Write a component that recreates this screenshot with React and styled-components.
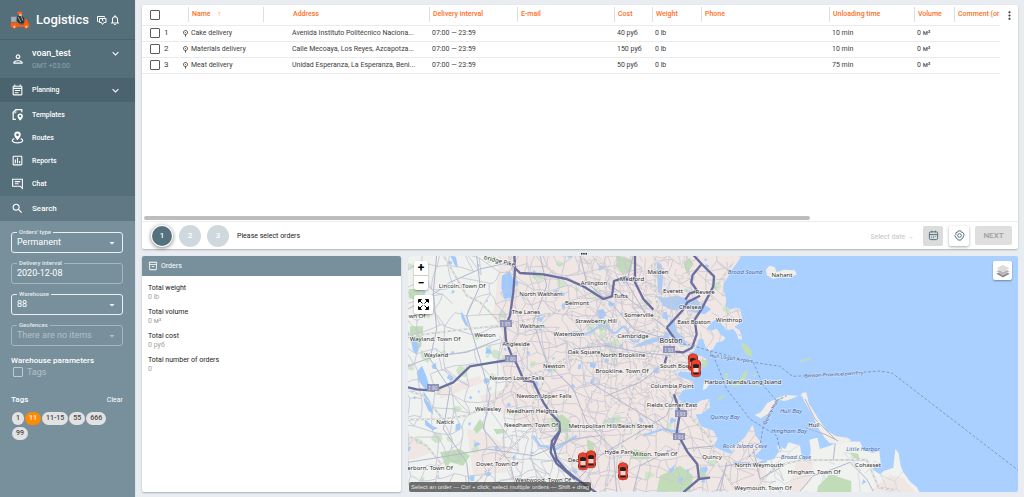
import React, { useState } from 'react';
import styled, { createGlobalStyle } from 'styled-components';
import {
  MdOutlinePerson,
  MdOutlineEventNote,
  MdOutlineAssessment,
  MdSearch,
  MdExpandMore,
  MdOutlineNotifications,
  MdMoreVert,
  MdOutlineInventory2,
  MdArrowDropDown,
} from 'react-icons/md';

const GlobalStyle = createGlobalStyle`
  * {
    box-sizing: border-box;
  }

  body {
    margin: 0;
    background: #e9edf1;
    color: #3c3c3c;
    font-family: Roboto, "Liberation Sans", sans-serif;
    font-size: 7px;
    line-height: 10px;
  }

  button, input, select {
    font: inherit;
    color: inherit;
    margin: 0;
  }

  button {
    padding: 0;
    border: none;
    background: none;
    cursor: pointer;
  }
`;

const Page = styled.div`
  display: flex;
  min-height: 100vh;
`;

/* ---------- sidebar ---------- */

const Sidebar = styled.aside`
  display: flex;
  flex-direction: column;
  flex: 0 0 136px;
  background: #78909c;
  border-right: 1px solid #dfe5e8;
  color: #fff;
`;

const Brand = styled.header`
  display: flex;
  align-items: center;
  height: 40px;
  padding: 0 14px 0 10px;
  background: #546e7a;
  border-bottom: 1px solid #4a626d;

  h1 {
    flex: 1;
    margin: 0 0 0 6px;
    font-size: 13px;
    line-height: 16px;
    font-weight: 500;
  }
`;

const IconButton = styled.button`
  display: flex;
  margin-left: 1px;
  font-size: 12px;
`;

const User = styled.button`
  display: flex;
  align-items: center;
  height: 38px;
  padding: 0 13px 0 11px;
  background: #546e7a;
  text-align: left;

  > svg:first-child {
    font-size: 14px;
  }
`;

const UserText = styled.span`
  flex: 1;
  margin-left: 7px;

  strong, small {
    display: block;
  }

  strong {
    font-size: 9px;
    line-height: 13px;
    font-weight: 500;
  }

  small {
    font-size: 7px;
    line-height: 12px;
    color: #8fa3ad;
  }
`;

const Chevron = styled(MdExpandMore)`
  align-self: ${(props) => (props.$top ? 'flex-start' : 'center')};
  margin-top: ${(props) => (props.$top ? '7px' : '0')};
  margin-left: auto;
  font-size: 13px;
`;

const Nav = styled.nav`
  background: #546e7a;
`;

const NavGroup = styled.div`
  padding: 1px 0;
`;

const NavLink = styled.a`
  display: flex;
  align-items: center;
  height: ${(props) => props.$height || '23px'};
  padding: 0 13px 0 11px;
  gap: 8px;
  background: ${(props) => props.$bg || 'transparent'};
  color: #fff;
  font-size: ${(props) => (props.$large ? '8px' : '7px')};
  font-weight: 500;
  text-decoration: none;

  > svg {
    font-size: 13px;
  }
`;

const Filters = styled.form`
  display: flex;
  flex-direction: column;
  gap: 6px;
  padding: 7px 12px 0 11px;
`;

const Field = styled.fieldset`
  min-width: 0;
  margin: 0;
  padding: 0 4px 3px;
  border: 1px solid ${(props) => (props.$dim ? '#a7b6be' : '#eceff1')};
  border-radius: 3px;
  position: relative;
  color: ${(props) => (props.$disabled ? '#b4c1c8' : '#fff')};

  legend {
    margin-left: 1px;
    padding: 0 2px;
    font-size: 6px;
    line-height: 8px;
    font-weight: 500;
    color: #e4eaed;
  }

  input, select {
    display: block;
    width: 100%;
    height: 13px;
    padding: 0 0 0 1px;
    border: none;
    outline: none;
    background: none;
    appearance: none;
    font-size: 9px;
    line-height: 13px;
    font-weight: 400;
    opacity: 1;
  }

  svg {
    position: absolute;
    right: 4px;
    bottom: 3px;
    font-size: 12px;
    pointer-events: none;
  }
`;

const WarehouseParams = styled.div`
  margin-top: 3px;

  h2 {
    margin: 0;
    font-size: 8px;
    line-height: 12px;
    font-weight: 500;
  }

  label {
    display: flex;
    align-items: center;
    gap: 4px;
    padding-left: 2px;
    color: #b4c1c8;
    font-size: 9px;
  }
`;

const Checkbox = styled.input.attrs({ type: 'checkbox' })`
  appearance: none;
  flex: none;
  width: 10px;
  height: 10px;
  border: 1px solid ${(props) => props.$color || '#5c5c5c'};
  border-radius: 1px;

  &:checked {
    background: #ff8a00;
  }
`;

const TagsHead = styled.div`
  display: flex;
  justify-content: space-between;
  align-items: center;
  margin-top: 11px;

  h2 {
    margin: 0;
    font-size: 8px;
    line-height: 12px;
    font-weight: 500;
  }

  button {
    font-size: 7px;
  }
`;

const Tags = styled.div`
  display: flex;
  flex-wrap: wrap;
  gap: 2px 1px;
  padding-left: 1px;
`;

const Tag = styled.button`
  height: 13px;
  padding: 0 4px;
  border-radius: 7px;
  background: ${(props) => (props.$active ? '#ff8a00' : '#e2e2e2')};
  color: ${(props) => (props.$active ? '#fff' : '#484848')};
  font-size: 7px;
  line-height: 13px;
  font-weight: 500;
`;

/* ---------- content ---------- */

const Content = styled.main`
  display: flex;
  flex-direction: column;
  flex: 1;
  min-width: 0;
  padding: 5px 6px;
`;

const Card = styled.section`
  background: #fff;
  border-radius: 2px;
  box-shadow: 0 1px 2px rgba(0, 0, 0, 0.25);
`;

const OrdersCard = styled(Card)`
  display: flex;
  flex-direction: column;
  flex: 244 1 0;
`;

const TableArea = styled.div`
  display: flex;
  align-items: flex-start;
  flex: 1;
  overflow: hidden;
`;

const Table = styled.table`
  flex: 1;
  width: 100%;
  min-width: 0;
  table-layout: fixed;
  border-collapse: collapse;

  th, td {
    padding: 0 0 0 3px;
    border-bottom: 1px solid #ebebeb;
    text-align: left;
    font-weight: 400;
    white-space: nowrap;
    overflow: hidden;
  }

  th {
    height: 20px;
    color: #ff6f26;
    font-weight: 500;
  }

  th span {
    display: block;
    height: 15px;
    margin-left: -3px;
    padding-left: 3px;
    border-left: 1px solid #dedede;
    line-height: 15px;
    overflow: hidden;
  }

  td {
    height: 16px;
  }

  th:nth-child(3) span {
    padding-left: 29px;
  }

  td:nth-child(3) {
    padding-left: 29px;
  }

  th:first-child, td:first-child {
    padding-left: 8px;
  }
`;

const SortArrow = styled.i`
  margin-left: 7px;
  font-style: normal;
`;

const RowHead = styled.label`
  display: flex;
  align-items: center;
  gap: 4px;
  font-size: 8px;

  svg {
    margin-left: auto;
  }
`;

const MenuButton = styled.button`
  display: flex;
  align-items: center;
  justify-content: center;
  flex: 0 0 18px;
  height: 20px;
  font-size: 13px;
`;

const Scrollbar = styled.div`
  width: 76%;
  height: 4px;
  margin: 0 2px 1px;
  border-radius: 2px;
  background: #bdbdbd;
`;

const Footer = styled.footer`
  display: flex;
  align-items: center;
  height: 28px;
  padding: 0 6px 0 10px;
  border-top: 1px solid #ececec;
`;

const Step = styled.button`
  width: ${(props) => (props.$active ? '20px' : '22px')};
  height: ${(props) => (props.$active ? '20px' : '22px')};
  margin-right: ${(props) => (props.$active ? '7px' : '6px')};
  border-radius: 50%;
  background: ${(props) => (props.$active ? '#56717e' : '#cfd8dc')};
  box-shadow: ${(props) => (props.$active ? '0 0 0 1px #fff, 0 1px 4px 1px rgba(0, 0, 0, 0.5)' : 'none')};
  color: #fff;
  font-size: 8px;
  font-weight: 500;
`;

const Hint = styled.p`
  flex: 1;
  margin: 0 0 0 2px;
  color: #222;
`;

const DateHint = styled.span`
  margin-right: 9px;
  padding-top: 3px;
  color: #c4c4c4;
`;

const SquareButton = styled.button`
  display: flex;
  align-items: center;
  justify-content: center;
  width: 20px;
  height: 20px;
  margin-right: 6px;
  border-radius: 2px;
  background: ${(props) => (props.$flat ? '#dcdcdc' : '#fff')};
  box-shadow: ${(props) => (props.$flat ? 'none' : '0 1px 3px rgba(0, 0, 0, 0.35)')};
  color: #4c6a78;
  font-size: 11px;
`;

const NextButton = styled.button`
  width: 37px;
  height: 19px;
  border-radius: 2px;
  background: #dfdfdf;
  color: #a0a0a0;
  font-size: 8px;
  font-weight: 500;
`;

const Splitter = styled.div`
  height: 7px;
  padding-left: 8px;
  text-align: center;
  line-height: 0;
`;

const Lower = styled.div`
  display: grid;
  grid-template-columns: minmax(0, 259fr) minmax(0, 610fr);
  gap: 7px;
  flex: 236 1 0;
`;

const PanelTitle = styled.h2`
  display: flex;
  align-items: center;
  gap: 3px;
  height: 20px;
  margin: 0;
  padding-left: 6px;
  border-radius: 2px 2px 0 0;
  background: #78909c;
  color: #fff;
  font-size: 7px;
  font-weight: 400;

  svg {
    font-size: 10px;
  }
`;

const Totals = styled.dl`
  margin: 0;
  padding: 7px 6px;

  dt {
    color: #222;
  }

  dd {
    margin: 0 0 5px;
    color: #a3a3a3;
    line-height: 9px;
  }
`;

const MapPanel = styled.section`
  position: relative;
  min-height: 236px;
  border-radius: 2px;
  background: #aad0ff;
  overflow: hidden;
`;

const MapSvg = styled.svg`
  position: absolute;
  inset: 0;
  width: 100%;
  height: 100%;
  font-family: "Noto Sans", sans-serif;
`;

const MapControls = styled.div`
  position: absolute;
  top: 5px;
  left: 6px;
`;

const ZoomGroup = styled.div`
  width: 14px;
  margin-bottom: 5px;
  border-radius: 2px;
  background: #fff;
  box-shadow: 0 1px 2px rgba(0, 0, 0, 0.35);

  button {
    display: block;
    width: 14px;
    height: 14px;
    color: #000;
    font-size: 12px;
    line-height: 14px;
    font-weight: 700;
  }

  button + button {
    height: 15px;
    border-top: 1px solid #ccc;
  }
`;

const MapButton = styled.button`
  display: flex;
  align-items: center;
  justify-content: center;
  width: 19px;
  height: 19px;
  border-radius: 2px;
  background: #fff;
  box-shadow: 0 1px 2px rgba(0, 0, 0, 0.35);
`;

const LayersButton = styled(MapButton)`
  position: absolute;
  top: 5px;
  right: 6px;
`;

const MapHint = styled.p`
  position: absolute;
  bottom: 0;
  left: 1px;
  margin: 0;
  padding: 0 2px;
  border-radius: 2px;
  background: rgba(60, 60, 60, 0.72);
  color: #e4e4e4;
  font-family: "Liberation Sans", sans-serif;
  font-size: 6px;
`;

/* ---------- icons ---------- */

const Logo = () => (
  <svg width="20" height="18" viewBox="0 0 60 54" aria-hidden="true">
    <path d="M3 17h17v17H3z" fill="#9a9fa2" />
    <path d="M5 21h12M5 27h12" stroke="#cfd3d6" strokeWidth="2" />
    <path d="M22 15l12-2 8 8 2 13-8 4-10-2-6-8z" fill="#2c3338" />
    <path d="M24 17l8 16M33 15l6 14" stroke="#9aa2a6" strokeWidth="3" />
    <path d="M22 4q8-6 15 1l-2 7-11-2z" fill="#ff6417" />
    <path d="M27 10h8v5h-7z" fill="#f4c8a4" />
    <path d="M2 35h22l8 7h9l4-18h5l8 17v7H2z" fill="#ff5a0a" />
    <circle cx="13" cy="46" r="7" fill="#ff6417" />
    <circle cx="49" cy="46" r="7" fill="#ff6417" />
    <circle cx="13" cy="47" r="3" fill="#e8d9d0" />
    <circle cx="49" cy="47" r="3" fill="#e8d9d0" />
  </svg>
);

const WhatsNewIcon = () => (
  <svg width="1em" height="1em" viewBox="0 0 24 24" fill="none" stroke="currentColor" strokeWidth="2">
    <path d="M5 15H3V5h14v2" />
    <path d="M7 9h13v8h-4l-3 4-2-4H7z" />
    <path d="M13 10v3l2 1" />
  </svg>
);

const TemplatesIcon = () => (
  <svg width="1em" height="1em" viewBox="0 0 24 24" fill="none" stroke="currentColor" strokeWidth="2.2">
    <path d="M9 21H4V8l5-5h11v5" />
    <path d="M3 9h6V3" strokeWidth="1.5" />
    <path d="M17 10a5 5 0 0 0-5 5c0 4 5 8 5 8s5-4 5-8a5 5 0 0 0-5-5zm0 3a2 2 0 1 1 0 4 2 2 0 0 1 0-4z" fill="currentColor" fillRule="evenodd" stroke="none" />
  </svg>
);

const RoutesIcon = () => (
  <svg width="1em" height="1em" viewBox="0 0 24 24" fill="currentColor">
    <path fillRule="evenodd" d="M12 1a6 6 0 0 0-6 6c0 4 6 10 6 10s6-6 6-10a6 6 0 0 0-6-6zm0 3.500a2.500 2.500 0 1 1 0 5 2.500 2.500 0 0 1 0-5z" />
    <path d="M6 14c-7 3-3 8 6 8s13-5 6-8" fill="none" stroke="currentColor" strokeWidth="2.200" />
  </svg>
);

const ChatIcon = () => (
  <svg width="1em" height="1em" viewBox="0 0 24 24" fill="none" stroke="currentColor" strokeWidth="2">
    <path d="M3 4h18v17l-4-4H3z" />
    <path d="M7 8.500h10M7 12.500h7" strokeWidth="2" />
  </svg>
);

const PinIcon = () => (
  <svg width="5" height="7" viewBox="0 0 10 14" fill="none" stroke="#444">
    <path d="M5 13V9a4 4 0 1 1 .1 0" strokeWidth="2" />
    <circle cx="5" cy="5" r="1" fill="#444" stroke="none" />
  </svg>
);

const CalendarIcon = () => (
  <svg width="1em" height="1em" viewBox="0 0 24 24" fill="none" stroke="currentColor" strokeWidth="2">
    <rect x="3" y="4" width="18" height="17" rx="3" />
    <path d="M3 10h18M8 1.500v4M16 1.500v4" />
    <path d="M7 14h2M11 14h2M15 14h2M7 17h2M11 17h2" strokeWidth="1.500" />
  </svg>
);

const SettingsIcon = () => (
  <svg width="1em" height="1em" viewBox="0 0 24 24" fill="none" stroke="currentColor" strokeWidth="2" strokeLinejoin="round">
    <path d="M9 2h6l1.500 3 3 .5 3 5.500-2 2 0 0-1 4.500-3 1.500L15 22H9l-1.500-3-3-1.500L2 12l2-2.500.5-4 3-.5z" />
    <circle cx="12" cy="12" r="4" />
  </svg>
);

const FitIcon = () => (
  <svg width="13" height="13" viewBox="0 0 26 26" fill="#000" stroke="#000" strokeWidth="2">
    <path d="M4 4l7 7M22 4l-7 7M4 22l7-7M22 22l-7-7" />
    <path d="M3 3h6L3 9zM23 3h-6l6 6zM3 23h6l-6-6zM23 23h-6l6-6z" />
  </svg>
);

const LayersIcon = () => (
  <svg width="16" height="16" viewBox="0 0 26 26">
    <path d="M13 12l11 5.500-11 6-11-6z" fill="#8c8c8c" />
    <path d="M13 8l11 5.500-11 6-11-6z" fill="#b4b4b4" stroke="#fff" strokeWidth=".6" />
    <path d="M13 3l11 5.500-11 6-11-6z" fill="#dcdcdc" stroke="#fff" strokeWidth=".6" />
  </svg>
);

/* ---------- map ---------- */

// small seeded generator, the street pattern is the same on every render
const createRandom = (seed) => () => {
  seed = (seed * 16807) % 2147483647;
  return seed / 2147483647;
};

const buildStreets = (x0, y0, x1, y1, step, seed, keep) => {
  const random = createRandom(seed);
  const cols = Math.ceil((x1 - x0) / step) + 1;
  const rows = Math.ceil((y1 - y0) / step) + 1;
  const nodes = [];
  for (let r = 0; r < rows; r++) {
    for (let c = 0; c < cols; c++) {
      nodes.push([
        Math.round(x0 + c * step + (random() - 0.5) * step * 0.95),
        Math.round(y0 + r * step + (random() - 0.5) * step * 0.95),
      ]);
    }
  }
  let d = '';
  const link = (a, b) => {
    if (random() > keep) return;
    const mx = Math.round((a[0] + b[0]) / 2 + (random() - 0.5) * step * 0.4);
    const my = Math.round((a[1] + b[1]) / 2 + (random() - 0.5) * step * 0.4);
    d += `M${a[0]} ${a[1]}Q${mx} ${my} ${b[0]} ${b[1]}`;
  };
  for (let r = 0; r < rows; r++) {
    for (let c = 0; c < cols; c++) {
      const node = nodes[r * cols + c];
      if (c + 1 < cols) link(node, nodes[r * cols + c + 1]);
      if (r + 1 < rows) link(node, nodes[(r + 1) * cols + c]);
      if (c + 1 < cols && r + 1 < rows && random() > 0.75) link(node, nodes[(r + 1) * cols + c + 1]);
    }
  }
  return d;
};

const buildPatches = (count, x0, x1, seed, size) => {
  const random = createRandom(seed);
  let d = '';
  for (let i = 0; i < count; i++) {
    const x = Math.round(x0 + random() * (x1 - x0));
    const y = Math.round(20 + random() * 700);
    const s = 3 + random() * size;
    const p = Array.from({ length: 6 }, (_, k) => {
      const a = (k / 6) * Math.PI * 2;
      const l = s * (0.5 + random());
      return `${Math.round(x + Math.cos(a) * l)} ${Math.round(y + Math.sin(a) * l)}`;
    });
    d += `M${p.join('L')}Z`;
  }
  return d;
};

const wideStreets = buildStreets(10, 10, 620, 740, 48, 71, 0.78);
const townStreets = buildStreets(310, 10, 1130, 740, 31, 97, 0.62);
const cityStreets = buildStreets(560, 20, 880, 480, 18, 53, 0.55);
const southStreets = buildStreets(1130, 600, 1560, 740, 46, 19, 0.5);
const ponds = buildPatches(80, 24, 960, 33, 7);
const woods = buildPatches(60, 24, 1000, 45, 14);

const mainland =
  'M20 18L1025 18 1012 40 998 58 985 80 972 102 972 130 978 152 975 172 992 182 1005 176 1020 180 1026 208 1014 226 1002 234 1018 244 1026 264 1016 260 1000 240 980 242 968 228 950 210 936 218 918 240 932 246 950 240 962 258 976 266 968 276 950 280 938 300 926 306 918 296 910 270 896 270 888 292 882 306 866 310 872 318 905 322 920 332 905 345 888 362 868 370 840 366 830 378 850 388 880 398 878 418 848 424 834 444 850 466 884 472 900 456 926 450 930 474 904 494 886 496 902 532 940 546 952 570 940 590 962 604 992 616 1000 608 976 588 1008 590 1036 564 1058 528 1066 560 1082 580 1082 602 1060 624 1096 636 1122 630 1138 606 1130 590 1156 600 1166 580 1200 590 1206 626 1214 634 1230 630 1232 600 1228 572 1252 566 1260 600 1290 590 1320 576 1380 578 1390 602 1418 612 1438 606 1442 640 1416 660 1440 676 1452 666 1480 656 1486 600 1496 612 1502 650 1510 670 1532 700 1550 714 1560 732 20 732Z';

const islands =
  'M1098 62l10-12 16 4 6 16 20-8 34 2 6 12-20 10-30-2-20 6-20-12zM1205 432l14-2 8 34 34 54 20 28 28 16 34 4 10 8-20 12-44-4-14-14-20-30-20-44-24-40zM1064 498l18-8 20-28 20-10 8 6-12 14-14 22-22 14zM1126 450l30-12 38 2-20 10-20 6zM1200 440l16-8-2 12zM912 400l12-8 6 10-10 16-12 6zM1008 250l14 6 4 16-10-2z';

const greenIslands =
  'M1020 282l14 2 20 20 2 20-16-6zM974 370l10 6-2 18-8-4zM1000 400l20-8 12-22 12-10-6 28-16 20-24 6zM955 446l24-10-10 10-16 10zM1050 380l24-8-8 10zM1060 410l18-14-4 12zM1128 452l24-8-14 12zM1200 336l36-12-8 8-30 8zM896 330l24 4 4 12-14 12-6-6 10-10z';

const bigWater =
  'M50 370l16-20 14 34 10 36-10 6-24-30zM70 426l20 30 10 40-14-10-14-30zM306 80l24-14 12 30-6 50-24 4-8-34zM36 270l12-6 8 40-8 12-10-14zM150 18l14 30 10 8-6-32zM184 185l10 20 12 30-10-6-12-24zM1390 690l8 10-12 6zM590 184l20-4 10 18-20 16zM570 340l20 4-6 14-14-4zM74 510l22 20 18 8-16 6-22-16zM260 296l14 8 2 10-20 0z';

const river =
  'M500 262q20-18 40-10t40-8 30-14 22 16 28-6 28 18 36 4 M844 500l-14-20 2-30M730 560l60-20 50 10M1000 640l60 6 40-10M400 560l20 30 50 10 60-40';

const basin =
  'M696 296l40-22 40-10 24-14 14 6-6 14-30 6-50 14-20 4zM770 140l22 6 40-6 44 14 12-8 14 20-6 18-40-4-40 4-26-14zM770 40l14 6 6 40-6 50-10-6zM860 160l50 6 24 14-20 16-44-10zM802 240l10-30 12 6 6 30 20 20 14 24-22-2-20-20z';

const bigGreen =
  'M26 120l40 0 10 20-20 12-30-4zM30 232l40 0-6 60-20 20-14-40zM120 610l60-10 30 20-20 30-40-10-10 20zM650 18l48 14-4 36-26 8-20-24zM450 510l36-14 24 20 4 30-40 8zM780 680l60-30 40 30-10 48-100 0zM560 570l20 10 4 30-20 6zM220 540l20-30 14 20-24 24zM1254 712l36-36 64 20 0 36-104 0zM1350 610l24 4 6 18-20-6zM700 600l40 10 10 20-60 0zM280 540l30 0 10 10-30 6zM590 220l36-6 4 24-30 10zM850 40l20-14 10 20-20 30zM900 650l20 16-6 30-14-10z';

const rails =
  'M130 18L200 140 240 160 300 220 316 250M24 262L200 240 300 230 440 200 540 160M24 424L70 440 130 510 200 500 280 460 330 400 440 360 560 320 760 310M24 512L130 510M24 560L80 590 120 640 100 727M200 727L290 640 350 580 400 530 400 460 430 400M440 360L600 270 780 240M765 18L765 120 780 220 800 240M800 240L700 420 670 560 660 650 610 727M1000 40L930 140 840 230M810 260L810 440 850 480 930 570 950 640 1010 727M1080 700L1130 650 1200 634 1400 632 1436 716 1480 722';

const secondary =
  'M24 180L80 150 150 100 240 60 330 40M24 350L110 320 200 310 300 270M110 18L100 130 110 240 90 330 150 420 130 540 200 640 210 727M24 640L150 620 260 600 400 620 520 570 600 560M230 18L240 110 200 200 240 330 270 440 250 540 330 640 350 727M420 18L440 110 400 220 440 340 520 420 560 520 640 600 650 727M540 18L560 100 640 170 700 240 800 270M500 727L600 620 700 560 800 500 830 420M520 300L620 290 720 310 810 320M620 100L700 160 790 230M620 440L720 400 800 340M700 18L680 100 740 200M570 400L700 480 830 560M820 600L720 650 700 727M850 600L950 590M950 727L980 650 1050 640M1200 727L1240 680 1300 660 1350 640 1400 690 1420 727M1263 540L1306 580 1300 632M980 640L960 727M1060 600L1080 690 1150 650';

const highways =
  'M343 18L345 60 340 130 330 200 315 235 318 275 335 320 350 345 372 395 400 398 415 430 430 460 450 490 478 520 480 545 460 590 470 630 500 665 530 690 590 732M480 545L456 575 452 610 470 644 525 690M343 55L360 72 430 76 500 90 550 112 610 150 636 142 642 96 675 85 700 95M24 415L50 421 100 425 160 400 210 352 280 340 345 330M705 18L705 100 730 150 760 182M800 236L848 184 862 160 900 140M880 18L905 45 878 78 874 100 892 126 868 134 856 152M905 45L942 82 940 112 905 180 884 212 890 256 876 296 850 310 826 308M800 236L830 278M800 322L794 342M822 436L840 490 830 550 862 608 892 646 897 690 850 730M897 690L930 686';

const ferries =
  'M822 280L880 290 930 306 1060 340 1140 352 1178 382 1280 378 1440 366 1476 372 1860 668M920 300L940 320 980 420 1050 510 1130 560 1140 600M1060 340L1090 410 1130 455 1090 530 1080 590 1040 630M1130 455L1160 440';

const places = [
  ['Lincoln, Town Of', 462, 289],
  ['North Waltham', 541, 297],
  ['The Lanes', 526, 315],
  ['Waltham', 532, 329],
  ['Weston', 485, 338],
  ['Wayland, Town Of', 435, 342],
  ['Wayland', 436, 358],
  ['Angleside', 516, 347],
  ['Newton', 554, 369],
  ['Newton Lower Falls', 517, 381],
  ['Newton Upper Falls', 544, 399],
  ['Wellesley', 488, 412],
  ['Needham Heights', 532, 414],
  ['Needham, Town Of', 531, 428],
  ['Natick', 445, 425],
  ['Metropolitan Hill/Beach Street', 611, 429],
  ['Dover, Town Of', 497, 467],
  ['erborn, Town Of', 430, 471],
  ['wn Of', 417, 319],
  ['Westwood, Town Of', 543, 483],
  ['Arlington', 594, 286],
  ['Belmont', 577, 306],
  ['Strawberry Hill', 596, 324],
  ['Watertown', 569, 337],
  ['Oak Square', 584, 355],
  ['North Brookline', 623, 358],
  ['Brookline, Town Of', 622, 374],
  ['Dedham', 580, 463],
  ['Hyde Park', 619, 455],
  ['Malden', 658, 275],
  ['Medford', 632, 282],
  ['Tufts', 621, 299],
  ['Everett', 673, 294],
  ['Revere', 705, 295],
  ['Chelsea', 690, 310],
  ['Somerville', 639, 318],
  ['East Boston', 694, 325],
  ['Winthrop', 729, 323],
  ['Cambridge', 633, 339],
  ['South Boston', 679, 369],
  ['Columbia Point', 672, 389],
  ['Fields Corner East', 672, 408],
  ['Harbor Islands/Long Island', 743, 385],
  ['Quincy', 712, 460],
  ['Milton, Town Of', 655, 457],
  ['North Weymouth', 759, 468],
  ['Hingham, Town Of', 814, 475],
  ['Weymouth, Town Of', 763, 491],
  ['Nahant', 782, 278],
  ['Hull', 814, 428],
  ['Cohasset', 868, 468],
];

const waters = [
  ['Broad Sound', 745, 275],
  ['Quincy Bay', 725, 420],
  ['Hull Bay', 791, 414],
  ['Hingham Bay', 789, 434],
  ['Rock Island Cove', 745, 449],
  ['Broad Cove', 796, 460],
  ['Little Harbor', 863, 452],
];

const shields = [
  ['I 95', 506, 325],
  ['I 90', 511, 360],
  ['I 90', 433, 389],
  ['I 93', 669, 351],
  ['I 93', 681, 415],
  ['I 93', 679, 438],
];

const cars = [
  [583, 462],
  [591, 460],
  [693, 363],
  [696, 369],
  [623, 472],
];

const Car = ({ x, y }) => (
  <g transform={`translate(${x} ${y})`}>
    <rect x="-5" y="-6" width="10" height="4" rx="1" fill="#444" />
    <rect x="-5" y="3" width="10" height="4" rx="1" fill="#444" />
    <path d="M-4-7q4-3 8 0l.6 6-.6 9q-4 2-8 0l-.6-9z" fill="#f0402c" stroke="#a8261a" strokeWidth=".5" />
    <path d="M-3.200-3q3.200-2 6.400 0l-.6 3h-5.200z" fill="#222" />
    <rect x="-2.500" y="0" width="5" height="4.500" fill="#f8cfc4" />
    <path d="M-3 4.500h6l-.5 2h-5z" fill="#222" />
  </g>
);

const BostonMap = () => (
  <MapSvg viewBox="408 257 610 236" preserveAspectRatio="xMidYMid slice" role="img" aria-label="Map">
    <defs>
      <clipPath id="land">
        <path d={mainland} />
      </clipPath>
    </defs>
    <g transform="translate(400 250) scale(0.333333)" fill="none" strokeLinejoin="round">
      <path d={mainland} fill="#eff2ef" />
      <path d={islands} fill="#f1eeea" />
      <g clipPath="url(#land)">
        <path d="M300 18H1100V727H930L560 727 540 690 470 600 420 560 330 500 250 470 240 440 320 420 300 340 310 260 280 200ZM200 540l60 10 80 60-20 60-100 10zM120 420l120-40 10 20-130 50z" fill="#f0e7e4" />
        <path d="M1190 640l50 0-10 60-30 30-40 0zM1410 727l60-50 40 10 40 45zM24 560l40 10 30 40-50 20-20 0z" fill="#f0e7e4" />
        <path d={woods} fill="#cfe5ca" />
        <path d={bigGreen} fill="#c0ddb7" />
        <path d={ponds} fill="#a6cdfb" />
        <path d={bigWater} fill="#9fc9ff" />
        <path d={basin} fill="#a6cdfb" />
        <path d={river} stroke="#a6cdfb" strokeWidth="7" />
        <path d={wideStreets} stroke="#c3c5d6" strokeWidth="2.500" />
        <path d={townStreets} stroke="#cac8d4" strokeWidth="2.500" />
        <path d={cityStreets} stroke="#cbc9d3" strokeWidth="2" />
        <path d={southStreets} stroke="#cfd1dc" strokeWidth="2" />
        <path d={rails} stroke="#c9c9c9" strokeWidth="5" />
        <path d={rails} stroke="#f2f2f2" strokeWidth="3" strokeDasharray="9 7" />
        <path d={secondary} stroke="#b4b7cd" strokeWidth="3" />
        <path d={highways} stroke="#6b6f9f" strokeWidth="7" />
      </g>
      <path d={greenIslands} fill="#c3dfb2" />
      <path d="M1215 450l30 60 40 40 20 20M1215 536l60 20 40 20" stroke="#b2b5ca" strokeWidth="3" />
      <path d={ferries} stroke="#7b97cc" strokeWidth="3" strokeDasharray="8 6" />
    </g>
    {shields.map(([text, x, y]) => (
      <g key={`${x}-${y}`}>
        <rect x={x - 6} y={y - 4} width="12" height="7" fill="#8f93b8" />
        <text x={x} y={y + 2} textAnchor="middle" fontSize="5" fill="#e6e7f2">{text}</text>
      </g>
    ))}
    <g fontSize="6" textAnchor="middle" stroke="#fff" strokeOpacity=".7" strokeWidth="1.500" strokeLinejoin="round" paintOrder="stroke">
      <g fill="#2a2a2a">
        {places.map(([text, x, y]) => (
          <text key={text} x={x} y={y}>{text}</text>
        ))}
        <text x="671" y="344" fontSize="7">Boston</text>
        <text transform="translate(499 264) rotate(14)">bridge Pike</text>
      </g>
      <g fill="#4a6aa8" fontStyle="italic" strokeOpacity=".3">
        {waters.map(([text, x, y]) => (
          <text key={text} x={x} y={y}>{text}</text>
        ))}
      </g>
      <g fill="#4f6496" fontSize="5" strokeOpacity=".3">
        <text transform="translate(731 361) rotate(8)">Hull-Logan Airport</text>
        <text transform="translate(772 414) rotate(-62)">Quincy-Hull</text>
        <text transform="translate(834 377) rotate(-3)">Boston-Provincetown Fry</text>
      </g>
    </g>
    {cars.map(([x, y]) => (
      <Car key={`${x}-${y}`} x={x} y={y} />
    ))}
  </MapSvg>
);

/* ---------- data ---------- */

const navItems = [
  { label: 'Templates', icon: <TemplatesIcon /> },
  { label: 'Routes', icon: <RoutesIcon /> },
  { label: 'Reports', icon: <MdOutlineAssessment /> },
  { label: 'Chat', icon: <ChatIcon /> },
];

const columns = [
  ['Address', 166],
  ['Delivery interval', 88],
  ['E-mail', 97],
  ['Cost', 38],
  ['Weight', 49],
  ['Phone', 128],
  ['Unloading time', 85],
  ['Volume', 40],
  ['Comment (or', 0],
];

const orders = [
  ['Cake delivery', 'Avenida Instituto Politécnico Naciona...', '07:00 — 23:59', '', '40 руб', '0 lb', '', '10 min', '0 м³', ''],
  ['Materials delivery', 'Calle Mecoaya, Los Reyes, Azcapotza...', '07:00 — 23:59', '', '150 руб', '0 lb', '', '10 min', '0 м³', ''],
  ['Meat delivery', 'Unidad Esperanza, La Esperanza, Beni...', '07:00 — 23:59', '', '50 руб', '0 lb', '', '75 min', '0 м³', ''],
];

const totals = [
  ['Total weight', '0 lb'],
  ['Total volume', '0 м³'],
  ['Total cost', '0 руб'],
  ['Total number of orders', '0'],
];

const App = () => {
  const [activeTag, setActiveTag] = useState('11');

  return (
    <Page>
      <GlobalStyle />
      <Sidebar>
        <Brand>
          <Logo />
          <h1>Logistics</h1>
          <IconButton aria-label="News"><WhatsNewIcon /></IconButton>
          <IconButton aria-label="Notifications"><MdOutlineNotifications /></IconButton>
        </Brand>
        <User>
          <MdOutlinePerson />
          <UserText>
            <strong>voan_test</strong>
            <small>GMT +03:00</small>
          </UserText>
          <Chevron $top />
        </User>
        <Nav>
          <NavLink href="#planning" $height="24px" $bg="#4b636e">
            <MdOutlineEventNote />
            Planning
            <Chevron />
          </NavLink>
          <NavGroup>
            {navItems.map((item) => (
              <NavLink key={item.label} href={`#${item.label.toLowerCase()}`}>
                {item.icon}
                {item.label}
              </NavLink>
            ))}
          </NavGroup>
          <NavLink href="#search" $height="25px" $large $bg="#5f7883">
            <MdSearch />
            Search
          </NavLink>
        </Nav>
        <Filters>
          <Field>
            <legend><label htmlFor="type">Orders' type</label></legend>
            <select id="type"><option>Permanent</option></select>
            <MdArrowDropDown />
          </Field>
          <Field $dim>
            <legend><label htmlFor="interval">Delivery interval</label></legend>
            <input id="interval" type="text" defaultValue="2020-12-08" />
          </Field>
          <Field>
            <legend><label htmlFor="warehouse">Warehouse</label></legend>
            <select id="warehouse"><option>88</option></select>
            <MdArrowDropDown />
          </Field>
          <Field $dim $disabled>
            <legend><label htmlFor="geofences">Geofences</label></legend>
            <select id="geofences" disabled><option>There are no items</option></select>
            <MdArrowDropDown />
          </Field>
          <WarehouseParams>
            <h2>Warehouse parameters</h2>
            <label><Checkbox $color="#c0cbd1" />Tags</label>
          </WarehouseParams>
          <TagsHead>
            <h2>Tags</h2>
            <button type="button" onClick={() => setActiveTag('')}>Clear</button>
          </TagsHead>
          <Tags>
            {['1', '11', '11-15', '55', '666', '99'].map((tag) => (
              <Tag key={tag} type="button" $active={tag === activeTag} onClick={() => setActiveTag(tag)}>
                {tag}
              </Tag>
            ))}
          </Tags>
        </Filters>
      </Sidebar>

      <Content>
        <OrdersCard>
          <TableArea>
            <Table>
              <colgroup>
                <col width="46" />
                <col width="75" />
                {columns.map(([name, width]) => (
                  <col key={name} width={width || undefined} />
                ))}
              </colgroup>
              <thead>
                <tr>
                  <th><RowHead><Checkbox aria-label="Select all" /></RowHead></th>
                  <th><span>Name<SortArrow>↑</SortArrow></span></th>
                  {columns.map(([name]) => (
                    <th key={name}><span>{name}</span></th>
                  ))}
                </tr>
              </thead>
              <tbody>
                {orders.map((order, index) => (
                  <tr key={order[0]}>
                    <td>
                      <RowHead>
                        <Checkbox />
                        {index + 1}
                        <PinIcon />
                      </RowHead>
                    </td>
                    {order.map((value, i) => (
                      <td key={i}>{value}</td>
                    ))}
                  </tr>
                ))}
              </tbody>
            </Table>
            <MenuButton aria-label="Columns"><MdMoreVert /></MenuButton>
          </TableArea>
          <Scrollbar />
          <Footer>
            <Step $active>1</Step>
            <Step>2</Step>
            <Step>3</Step>
            <Hint>Please select orders</Hint>
            <DateHint>Select date →</DateHint>
            <SquareButton $flat aria-label="Date"><CalendarIcon /></SquareButton>
            <SquareButton aria-label="Settings"><SettingsIcon /></SquareButton>
            <NextButton>NEXT</NextButton>
          </Footer>
        </OrdersCard>

        <Splitter>
          <svg width="6" height="7" viewBox="0 0 6 7">
            <path d="M0 4h1.500v1.500H0zM2.200 4h1.500v1.500H2.200zM4.500 4H6v1.500H4.500z" fill="#222" />
          </svg>
        </Splitter>

        <Lower>
          <Card>
            <PanelTitle><MdOutlineInventory2 />Orders</PanelTitle>
            <Totals>
              {totals.map(([name, value]) => (
                <React.Fragment key={name}>
                  <dt>{name}</dt>
                  <dd>{value}</dd>
                </React.Fragment>
              ))}
            </Totals>
          </Card>
          <MapPanel>
            <BostonMap />
            <MapControls>
              <ZoomGroup>
                <button aria-label="Zoom in">+</button>
                <button aria-label="Zoom out">−</button>
              </ZoomGroup>
              <MapButton aria-label="Fit map"><FitIcon /></MapButton>
            </MapControls>
            <LayersButton aria-label="Layers"><LayersIcon /></LayersButton>
            <MapHint>Select an order — Ctrl + click; select multiple orders — Shift + drag</MapHint>
          </MapPanel>
        </Lower>
      </Content>
    </Page>
  );
};

export default App;
